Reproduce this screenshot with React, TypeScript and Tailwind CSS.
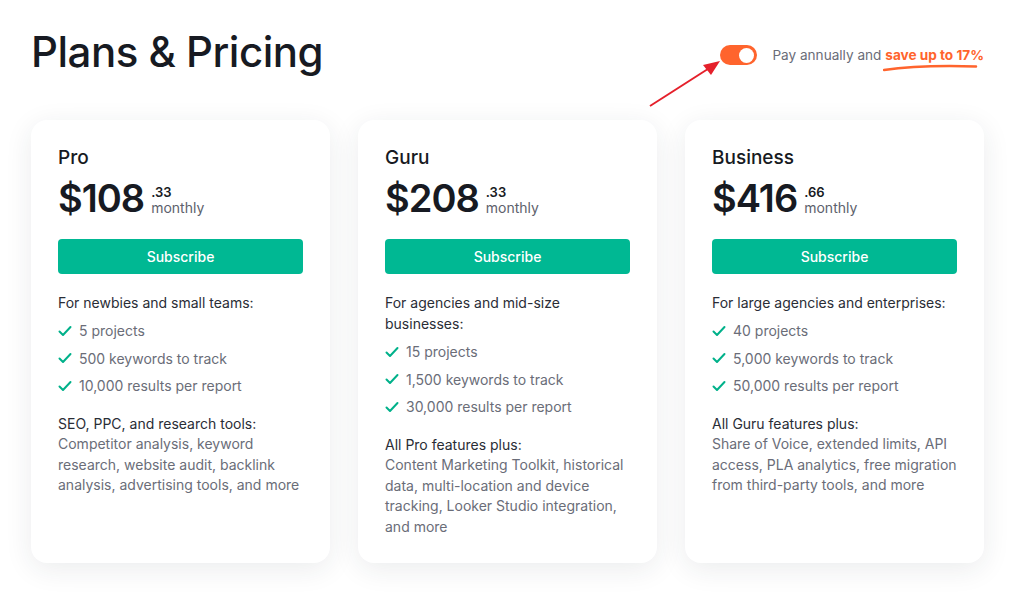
import React from "react";

type Plan = {
  name: string;
  whole: string;
  cents: string;
  audience: string;
  limits: string[];
  extraTitle: string;
  extra: string;
};

const plans: Plan[] = [
  {
    name: "Pro",
    whole: "$108",
    cents: ".33",
    audience: "For newbies and small teams:",
    limits: ["5 projects", "500 keywords to track", "10,000 results per report"],
    extraTitle: "SEO, PPC, and research tools:",
    extra:
      "Competitor analysis, keyword research, website audit, backlink analysis, advertising tools, and more",
  },
  {
    name: "Guru",
    whole: "$208",
    cents: ".33",
    audience: "For agencies and mid-size businesses:",
    limits: ["15 projects", "1,500 keywords to track", "30,000 results per report"],
    extraTitle: "All Pro features plus:",
    extra:
      "Content Marketing Toolkit, historical data, multi-location and device tracking, Looker Studio integration, and more",
  },
  {
    name: "Business",
    whole: "$416",
    cents: ".66",
    audience: "For large agencies and enterprises:",
    limits: ["40 projects", "5,000 keywords to track", "50,000 results per report"],
    extraTitle: "All Guru features plus:",
    extra:
      "Share of Voice, extended limits, API access, PLA analytics, free migration from third-party tools, and more",
  },
];

const Check = () => (
  <svg width="14" height="14" viewBox="0 0 14 14" className="shrink-0">
    <path
      d="M1.5 7.5 L5 11 L12.5 3"
      fill="none"
      stroke="#00b18a"
      strokeWidth="2"
      strokeLinecap="round"
      strokeLinejoin="round"
    />
  </svg>
);

const PlanCard = ({ plan }: { plan: Plan }) => (
  <div className="bg-white rounded-2xl shadow-[0_6px_28px_rgba(30,40,60,0.09)] px-[27px] pt-[25px] h-[443px]">
    <div className="text-[19px] leading-[26px] font-medium text-[#171a22]">{plan.name}</div>
    <div className="flex items-start mt-[5px]">
      <span className="text-[38px] leading-[44px] font-semibold text-[#171a22] tracking-[-1px]">
        {plan.whole}
      </span>
      <div className="ml-[7px] mt-[8px] flex flex-col">
        <span className="text-[13px] leading-[16px] font-semibold text-[#171a22]">{plan.cents}</span>
        <span className="text-[14px] leading-[16px] text-[#5d616c]">monthly</span>
      </div>
    </div>
    <button className="mt-[19px] w-full h-[35px] rounded-[4px] bg-[#00b893] text-white text-[14px] font-medium">
      Subscribe
    </button>
    <div className="mt-[18px] text-[14px] leading-[21px] text-[#2a2d36]">{plan.audience}</div>
    <ul className="mt-[7px] flex flex-col gap-[6.5px]">
      {plan.limits.map((l) => (
        <li key={l} className="flex items-center gap-[7px] text-[14px] leading-[21px] text-[#6a6d78]">
          <Check />
          {l}
        </li>
      ))}
    </ul>
    <div className="mt-[17px] text-[14px] leading-[21px] text-[#2a2d36]">{plan.extraTitle}</div>
    <div className="text-[14px] leading-[20.5px] text-[#6a6d78]">{plan.extra}</div>
  </div>
);

export default function App() {
  return (
    <div
      className="relative w-[1024px] h-[593px] bg-white overflow-hidden pl-[31px] pr-[40px]"
      style={{ fontFamily: "Inter, 'Noto Sans', sans-serif" }}
    >
      <div className="flex items-start justify-between h-[120px]">
        <h1 className="mt-[26px] text-[42px] leading-[52px] font-medium text-[#171a22] tracking-[-0.5px]">
          Plans &amp; Pricing
        </h1>
        <div className="mt-[45px] flex items-center">
          <div className="w-[37px] h-[20px] rounded-full bg-[#ff642d] flex items-center justify-end pr-[3px]">
            <div className="w-[15px] h-[15px] rounded-full bg-white" />
          </div>
          <div className="ml-[15px] text-[13.6px] leading-[20px] text-[#6a6d78]">
            Pay annually and{" "}
            <span className="relative font-bold text-[#ff642d]">
              save up to 17%
              <svg
                className="absolute left-[-2px] top-[17px]"
                width="96"
                height="8"
                viewBox="0 0 96 8"
              >
                <path
                  d="M1 6 C 25 2.5, 60 1.5, 93 2.5"
                  fill="none"
                  stroke="#ff642d"
                  strokeWidth="2.5"
                  strokeLinecap="round"
                />
              </svg>
            </span>
          </div>
        </div>
      </div>

      <div className="grid grid-cols-3 gap-[28px]">
        {plans.map((p) => (
          <PlanCard key={p.name} plan={p} />
        ))}
      </div>

      <svg className="absolute left-[645px] top-[55px]" width="80" height="56" viewBox="0 0 80 56">
        <line x1="5" y1="51" x2="66" y2="12" stroke="#e5202b" strokeWidth="2" />
        <polygon points="75,6 58,10 66,20" fill="#e5202b" />
      </svg>
    </div>
  );
}
